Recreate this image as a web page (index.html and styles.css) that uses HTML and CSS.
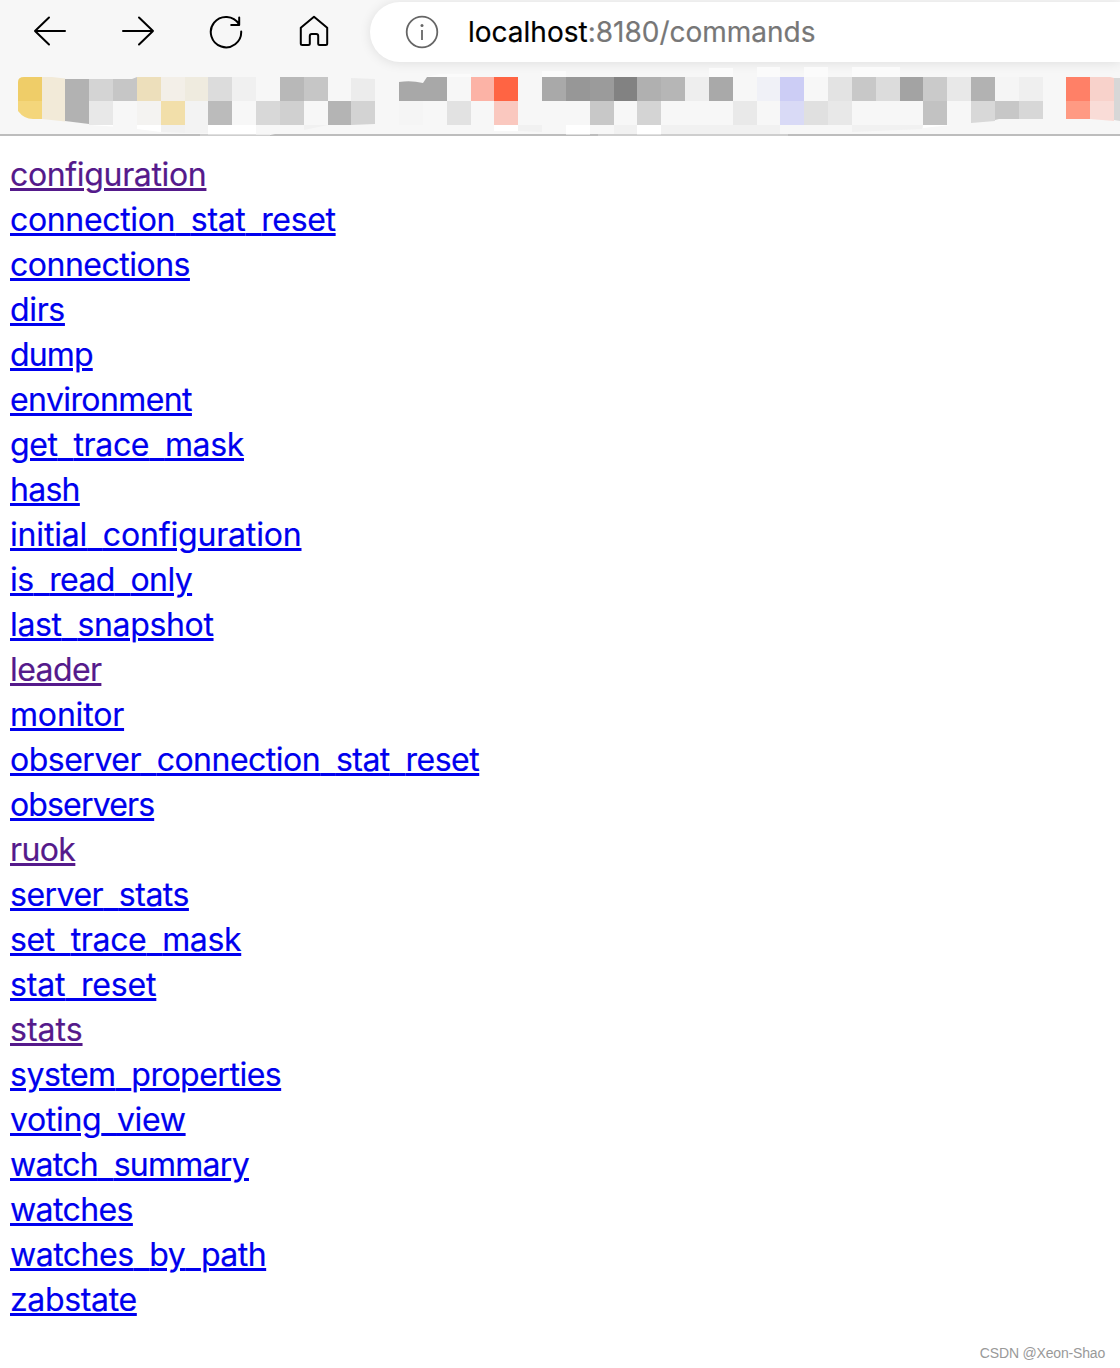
FILE: index.html
```html
<!DOCTYPE html>
<html lang="en">
<head>
<meta charset="utf-8">
<title>localhost:8180/commands</title>
<link rel="stylesheet" href="styles.css">
</head>
<body>
<header class="browser">
  <div class="toolbar">
    <nav class="controls">
      <svg class="icon" viewBox="0 0 36 36"><path d="M33 18H3M17 4.500L3 18l14 13.500"/></svg>
      <svg class="icon" viewBox="0 0 36 36"><path d="M3 18h30M19 4.500L33 18 19 31.500"/></svg>
      <svg class="icon" viewBox="0 0 36 36"><path d="M33.200 18.500A15.200 15.200 0 1 1 31 11.200M31.200 4.500v7.500h-8"/></svg>
      <svg class="icon" viewBox="0 0 36 36"><path d="M4.800 14.800L18 3.800l13.200 11v15.700q0 1.500-1.500 1.500h-6q-1.500 0-1.500-1.500V23q0-2-2-2h-4.400q-2 0-2 2v7.500q0 1.500-1.500 1.500h-6q-1.500 0-1.500-1.500z"/></svg>
    </nav>
    <div class="address">
      <svg class="info" viewBox="0 0 34 34"><circle cx="17" cy="17" r="15.300"/><path d="M17 15v10"/><circle class="dot" cx="17" cy="10.500" r="1.500"/></svg>
      <span class="url"><b class="host">localhost</b>:8180/commands</span>
    </div>
  </div>
  <svg class="bookmarks" viewBox="0 64 1120 72">
    <path fill="#bdbdbd" d="M0 134h1120v2H0z"/>
    <path fill="#efcd68" d="M18 82q0-5 6-5h18v24H18z"/>
    <path fill="#f4d67b" d="M18 101h24v18h-9q-9 0-15-8z"/>
    <path fill="#f2ead8" d="M42 77h10l13 1.500v43L42 119z"/>
    <path fill="#b2b2b2" d="M65 79h24v45l-24-3z"/>
    <path fill="#d4d4d4" d="M89 79h24v22H89z"/>
    <path fill="#c6c6c6" d="M113 79h19l5-2v24h-24z"/>
    <path fill="#eddfbb" d="M137 77h24v24h-24z"/>
    <path fill="#f3efe8" d="M161 77h24v24h-24z"/>
    <path fill="#efebdf" d="M185 77h23v24h-23z"/>
    <path fill="#dcdcdc" d="M208 77h24v24h-24z"/>
    <path fill="#f0f0f0" d="M232 77h24v24h-24z"/>
    <path fill="#b8b8b8" d="M280 77h24v24h-24z"/>
    <path fill="#c6c6c6" d="M304 77h24v24h-24z"/>
    <path fill="#ececec" d="M351 78l24 1v22h-24z"/>
    <path fill="#a8a8a8" d="M399 82q12-2 24 1l4-6h20v24h-48z"/>
    <path fill="#fcb3a6" d="M471 77h23v24h-23z"/>
    <path fill="#ff6443" d="M494 77h24v24h-24z"/>
    <path fill="#a9a9a9" d="M542 77h24v24h-24z"/>
    <path fill="#979797" d="M566 77h24v24h-24z"/>
    <path fill="#9b9b9b" d="M590 77h24v24h-24z"/>
    <path fill="#828282" d="M614 77h23v24h-23z"/>
    <path fill="#b0b0b0" d="M637 77h24v24h-24z"/>
    <path fill="#b6b6b6" d="M661 77h24v24h-24z"/>
    <path fill="#eeeeee" d="M685 77h24v24h-24z"/>
    <path fill="#a9a9a9" d="M709 77h24v24h-24z"/>
    <path fill="#f0f1f7" d="M757 77h23v24h-23z"/>
    <path fill="#cccdf5" d="M780 77h24v24h-24z"/>
    <path fill="#e3e3e3" d="M828 77h24v24h-24z"/>
    <path fill="#c8c8c8" d="M852 77h24v24h-24z"/>
    <path fill="#dcdcdc" d="M876 77h24v24h-24z"/>
    <path fill="#a3a3a3" d="M900 77h23v24h-23z"/>
    <path fill="#cacaca" d="M923 77h24v24h-24z"/>
    <path fill="#e8e8e8" d="M947 77h24v24h-24z"/>
    <path fill="#b2b2b2" d="M971 77h24v24h-24z"/>
    <path fill="#f5f5f5" d="M995 77h24v24h-24z"/>
    <path fill="#efefef" d="M1019 77h24v24h-24z"/>
    <path fill="#ff8067" d="M1066 77h24v24h-24z"/>
    <path fill="#f8d2cb" d="M1090 77h20l4 1v23h-24z"/>
    <path fill="#d7d7d7" d="M1114 78h6v43l-6-1z"/>
    <path fill="#e8e8e8" d="M89 101h24v24H89z"/>
    <path fill="#f4f3f1" d="M137 101h24v24h-24z"/>
    <path fill="#f2dfaa" d="M161 101h24v24h-24z"/>
    <path fill="#f3f3f3" d="M185 101h23v32h-23z"/>
    <path fill="#bbbbbb" d="M208 101h24v24h-24z"/>
    <path fill="#d8d8d8" d="M256 101h24v24h-24z"/>
    <path fill="#d0d0d0" d="M280 101h24v24h-24z"/>
    <path fill="#b4b4b4" d="M328 101h23v24h-23z"/>
    <path fill="#d3d3d3" d="M351 101h24v23l-24 1z"/>
    <path fill="#f5f5f5" d="M399 101h24v24h-24z"/>
    <path fill="#e2e2e2" d="M447 101h24v24h-24z"/>
    <path fill="#fac8bf" d="M494 101h24v24h-24z"/>
    <path fill="#c8c8c8" d="M590 101h24v24h-24z"/>
    <path fill="#d4d4d4" d="M637 101h24v24h-24z"/>
    <path fill="#e9e9e9" d="M733 101h24v24h-24z"/>
    <path fill="#d9daf6" d="M780 101h24v24h-24z"/>
    <path fill="#e0e0e0" d="M804 101h24v24h-24z"/>
    <path fill="#e8e8e8" d="M828 101h24v24h-24z"/>
    <path fill="#c2c2c2" d="M923 101h24v24h-24z"/>
    <path fill="#d8d8d8" d="M971 101h24v20l-24 2z"/>
    <path fill="#c7c7c7" d="M995 101h24v18h-20l-4 1z"/>
    <path fill="#d7d7d7" d="M1019 101h24v18h-24z"/>
    <path fill="#ff9a83" d="M1066 101h24v18h-24z"/>
    <path fill="#f9dcd7" d="M1090 101h24v20l-24-2z"/>
    <path fill="#ffffff" d="M89 125h24v1.500zM137 125h24v7l-24-3zM208 125h48v9.500h-48zM494 125h24v6h-24zM566 125h24v9.500h-24zM637 125h24v9.500h-24zM923 125h28l-28 3z"/>
    <path fill="#f1f1f1" d="M161 125h24v8l-24-1zM304 125h24l-24 5zM614 125h23v9h-23zM661 125h119v9H661zM852 125h71l-1 4-70 3zM518 125h24v7l-24-1z"/>
    <path fill="#f7f7f7" d="M256 125h24v8l-10 2h-14zM590 125h24v9h-24zM780 125h48l-28 9h-20z"/>
    <path fill="#fbfbfb" d="M425 77l15-3h31v3zM542 71h24v6h-24zM709 68h24v9h-24zM757 67h23v10h-23zM804 67h24v10h-24zM852 67h48v10h-48z"/>
    <path fill="#e0e0e0" d="M200 134.500h70v1h-70zM598 134.500h190v1H598z"/>
  </svg>
</header>
<main class="commands">
  <a class="visited snug" href="#">configuration</a>
  <a class="snug" href="#">connection<i>_</i>stat<i>_</i>reset</a>
  <a class="close" href="#">connections</a>
  <a class="snug" href="#">dirs</a>
  <a class="tightest" href="#">dump</a>
  <a class="tight" href="#">environment</a>
  <a class="snug" href="#">get<i>_</i>trace<i>_</i>mask</a>
  <a class="tighter" href="#">hash</a>
  <a class="slight" href="#">initial<i>_</i>configuration</a>
  <a class="tight" href="#">is<i>_</i>read<i>_</i>only</a>
  <a class="snug" href="#">last<i>_</i>snapshot</a>
  <a class="visited tight" href="#">leader</a>
  <a class="slight" href="#">monitor</a>
  <a class="close" href="#">observer<i>_</i>connection<i>_</i>stat<i>_</i>reset</a>
  <a class="tightest" href="#">observers</a>
  <a class="visited tight" href="#">ruok</a>
  <a class="close" href="#">server<i>_</i>stats</a>
  <a class="snug" href="#">set<i>_</i>trace<i>_</i>mask</a>
  <a class="slight" href="#">stat<i>_</i>reset</a>
  <a class="visited" href="#">stats</a>
  <a class="close" href="#">system<i>_</i>properties</a>
  <a class="snug" href="#">voting<i>_</i>view</a>
  <a class="tighter" href="#">watch<i>_</i>summary</a>
  <a class="tight" href="#">watches</a>
  <a class="close" href="#">watches<i>_</i>by<i>_</i>path</a>
  <a class="snug" href="#">zabstate</a>
</main>
<footer class="credit">CSDN @Xeon-Shao</footer>
</body>
</html>
```
FILE: styles.css
```css
* { box-sizing: border-box; }
body {
  margin: 0;
  height: 1368px;
  display: flex;
  flex-direction: column;
  background: #fff;
  font-family: Inter, "Noto Sans", sans-serif;
  overflow: hidden;
}
.browser { height: 136px; background: #f7f7f7; overflow: hidden; }
.toolbar { display: flex; height: 64px; padding-top: 2px; }
.controls { display: flex; gap: 52px; width: 370px; padding: 11px 0 0 32px; }
.icon { width: 36px; height: 36px; fill: none; stroke: #000; stroke-width: 2; stroke-linecap: round; stroke-linejoin: round; }
.address {
  flex: 1;
  display: flex;
  align-items: center;
  gap: 29px;
  height: 60px;
  padding-left: 35px;
  border-radius: 30px 0 0 30px;
  background: #fff;
  box-shadow: 0 1px 12px rgba(0, 0, 0, .1);
}
.info { width: 34px; height: 34px; fill: none; stroke: #666; stroke-width: 1.8; }
.info .dot { fill: #666; stroke: none; }
.url { font-size: 28px; color: #777; -webkit-text-stroke: .2px; }
.host { font-weight: 400; color: #000; }
.bookmarks { display: block; width: 1120px; height: 72px; }
.commands { display: flex; flex-direction: column; align-items: flex-start; padding: 16px 10px 0; }
.commands a {
  height: 45px;
  font-size: 32px;
  line-height: 45px;
  color: #00e;
  text-decoration: underline;
  text-decoration-thickness: 3px;
  text-underline-offset: 2px;
  -webkit-text-stroke: .2px;
}
/* underscores merge into the link underline */
.commands i { font-style: normal; color: transparent; letter-spacing: 1.1px; -webkit-text-stroke: 0; }
.commands .visited { color: #551a8b; }
.commands .slight { letter-spacing: -.17px; }
.commands .snug { letter-spacing: -.34px; }
.commands .close { letter-spacing: -.5px; }
.commands .tight { letter-spacing: -.6px; }
.commands .tighter { letter-spacing: -.72px; }
.commands .tightest { letter-spacing: -.85px; }
.credit { margin: auto 15px 6px auto; font: 14px/18px "Liberation Sans", sans-serif; letter-spacing: -.18px; color: #999; }
```
